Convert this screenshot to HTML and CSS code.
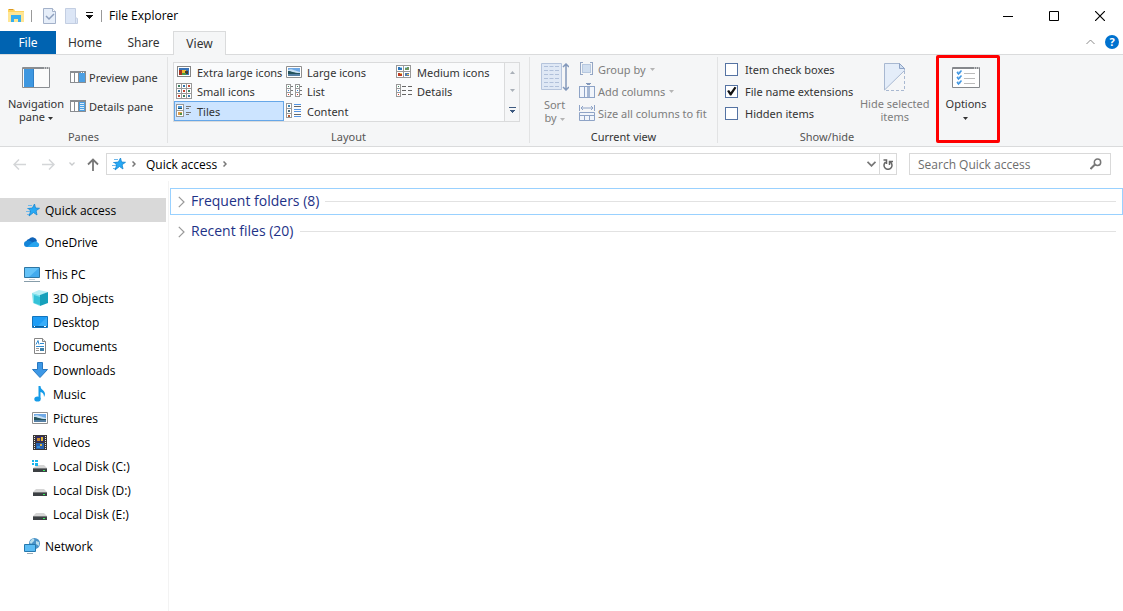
FILE: index.html
```html
<!DOCTYPE html>
<html lang="en">
  <head>
    <meta charset="UTF-8" />
    <meta name="viewport" content="width=device-width, initial-scale=1.0" />
    <title>File Explorer</title>
    <link rel="stylesheet" href="styles.css">
  </head>
  <body>
    <!-- shared icons -->
    <svg class="defs" width="0" height="0" aria-hidden="true">
      <symbol id="star" viewBox="0 0 16 16">
        <path d="M4 3.500h4M3 6.500h4M2 9.500h5M3 12.500h4" stroke="#6db8ec" />
        <path d="M10.500 2l1 4 4 .3-3.400 2.400.9 4.300-3.500-2.500-4.500 3.500 1.700-5-2.500-2.500 4.200-.5z" fill="#27a9f5" stroke="#1686d0" stroke-width=".8" />
      </symbol>
      <symbol id="disk" viewBox="0 0 16 16">
        <path d="M4 7h8l3 3H1z" fill="#d5d5d5" />
        <path d="M1 10h14v4H1z" fill="#3c4043" />
        <path d="M1 10h14v1H1z" fill="#77797b" />
        <path d="M11 12h2v1h-2z" fill="#35f05a" />
      </symbol>
      <symbol id="picture" viewBox="0 0 16 16">
        <path d="M.5 2.500h15v11H.5z" fill="#fff" stroke="#8f8f8f" />
        <path d="M2 4h12v4H2z" fill="#6fa9e6" />
        <path d="M2 6c3-2 5 0 12 2v2H2z" fill="#c8e0f2" />
        <path d="M2 7c4 0 5 2 12 2v1H2z" fill="#23525c" />
        <path d="M2 10h12v2H2z" fill="#5580a4" />
      </symbol>
      <symbol id="down" viewBox="0 0 5 3">
        <path d="M0 0h5L2.500 3z" fill="currentColor" />
      </symbol>
    </svg>

    <div class="window">
      <header class="titlebar">
        <svg class="app-icon" width="16" height="16" viewBox="0 0 16 16">
          <path d="M0 1h6l1 2h9v11H0z" fill="#ffd35c" />
          <path d="M0 4h16v10H0z" fill="#ffe694" />
          <path d="M1 1h4v1H1z" fill="#d9972a" />
          <path d="M3 14V7h10v7h-3v-3H6v3z" fill="#35aef0" />
        </svg>
        <span class="bar"></span>
        <button class="quick" aria-label="Properties">
          <svg width="13" height="16" viewBox="0 0 13 16">
            <path d="M.5.5h9l3 3v12H.5z" fill="#e6eef9" stroke="#a3b1c9" />
            <path d="M9.500.5v3h3" fill="#fff" stroke="#a3b1c9" />
            <path d="M3 8l3 3 5-5" fill="none" stroke="#8d9fbd" stroke-width="1.500" />
          </svg>
        </button>
        <button class="quick" aria-label="New folder">
          <svg width="13" height="16" viewBox="0 0 13 16">
            <path d="M.5.5h10v9l2 1v5H.5z" fill="#dce6f6" stroke="#c3cee2" />
            <path d="M10.500 9.500v6" stroke="#c3cee2" />
          </svg>
        </button>
        <button class="quick customize" aria-label="Customize Quick Access Toolbar">
          <svg width="7" height="7" viewBox="0 0 7 7" shape-rendering="crispEdges">
            <path d="M0 0h7v1H0zM0 3h7v1H6v1H5v1H4v1H3V6H2V5H1V4H0z" fill="#111" />
          </svg>
        </button>
        <span class="bar"></span>
        <h1>File Explorer</h1>
        <div class="caption-buttons">
          <button aria-label="Minimize">
            <svg width="10" height="10" viewBox="0 0 10 10"><path d="M0 5.500h10" stroke="#000" /></svg>
          </button>
          <button aria-label="Maximize">
            <svg width="10" height="10" viewBox="0 0 10 10"><path d="M.5.5h9v9h-9z" fill="none" stroke="#000" /></svg>
          </button>
          <button aria-label="Close">
            <svg width="10" height="10" viewBox="0 0 10 10"><path d="M0 0l10 10M10 0L0 10" stroke="#000" stroke-width="1.200" /></svg>
          </button>
        </div>
      </header>

      <nav class="tabs">
        <button class="tab file">File</button>
        <button class="tab home">Home</button>
        <button class="tab share">Share</button>
        <button class="tab active">View</button>
        <div class="tab-tools">
          <button aria-label="Minimize the ribbon">
            <svg width="9" height="6" viewBox="0 0 9 6"><path d="M.5 5l4-4 4 4" fill="none" stroke="#8a8a8a" /></svg>
          </button>
          <button class="help" aria-label="Help">?</button>
        </div>
      </nav>

      <div class="ribbon">
        <section class="group panes">
          <div class="group-body">
            <button class="big nav-pane">
              <svg width="28" height="21" viewBox="0 0 28 21">
                <path d="M.5.5h27v20H.5z" fill="#fbfbfb" stroke="#8a8d91" />
                <path d="M1 1h26v1H1z" fill="#8a8d91" />
                <path d="M2 2h9v18H2z" fill="#3e97e0" />
                <path d="M11.500 2v18" stroke="#2f7fc6" />
                <path d="M22 1h1M24 1h1M26 1h1" stroke="#fff" />
              </svg>
              <span>Navigation<br />pane <svg class="caret" width="5" height="3"><use href="#down" /></svg></span>
            </button>
            <div class="pane-list">
              <button class="small">
                <svg width="16" height="12" viewBox="0 0 16 12" shape-rendering="crispEdges">
                  <path d="M0 0h16v12H0z" fill="#8a8d91" />
                  <path d="M1 2h3v9H1zM5 2h3v9H5z" fill="#fff" />
                  <path d="M9 2h6v9H9z" fill="#4ca0e4" />
                  <path d="M11 1h1M13 1h1" stroke="#fff" />
                </svg>
                Preview pane
              </button>
              <button class="small">
                <svg width="16" height="12" viewBox="0 0 16 12" shape-rendering="crispEdges">
                  <path d="M0 0h16v12H0z" fill="#8a8d91" />
                  <path d="M1 2h3v9H1zM5 2h3v9H5z" fill="#fff" />
                  <path d="M9 2h6v9H9z" fill="#4ca0e4" />
                  <path d="M10 3h4v1h-4zM10 5h4v1h-4zM10 7h4v1h-4zM10 9h4v1h-4z" fill="#d9ecfb" />
                </svg>
                Details pane
              </button>
            </div>
          </div>
          <h2>Panes</h2>
        </section>

        <section class="group layout">
          <div class="group-body">
            <div class="gallery">
              <div class="gallery-items">
                <button>
                  <svg width="16" height="16" viewBox="0 0 16 16" shape-rendering="crispEdges">
                    <path d="M1.500 2.500h13v10h-13z" fill="#fff" stroke="#858585" />
                    <path d="M3 4h10v7H3z" fill="#3973b8" />
                    <path d="M3 6h3v5H3z" fill="#a33422" /><path d="M6 6h4v3H6z" fill="#f0b92f" />
                    <path d="M9 7h3v3H9z" fill="#463c32" /><path d="M6 9h4v2H6z" fill="#4c9b45" />
                  </svg>
                  Extra large icons
                </button>
                <button><svg width="16" height="16"><use href="#picture" /></svg>Large icons</button>
                <button>
                  <svg width="16" height="16" viewBox="0 0 16 16" shape-rendering="crispEdges">
                    <path d="M.5 1.500h7v6h-7zM7.500 1.500h7v6h-7zM.5 7.500h7v6h-7zM7.500 7.500h7v6h-7z" fill="#fff" stroke="#999" />
                    <path d="M2 3h4v3H2z" fill="#2d76bc" /><path d="M9 3h4v3H9z" fill="#6c9560" />
                    <path d="M2 9h4v3H2z" fill="#be3b20" /><path d="M9 9h4v3H9z" fill="#547ba8" />
                    <path d="M4 3h2v1H4zM9 3h2v1H9z" fill="#9bd0ee" /><path d="M4 9h2v1H4zM11 10h2v1h-2z" fill="#edc04e" />
                  </svg>
                  Medium icons
                </button>
                <button>
                  <svg width="16" height="16" viewBox="0 0 16 16" shape-rendering="crispEdges">
                    <path d="M.5.500h15v15H.5zM5.500 0v16M10.500 0v16M0 5.500h16M0 10.500h16" fill="#fff" stroke="#999" />
                    <path d="M2 2h2v2H2zM12 7h2v2h-2zM7 12h2v2H7z" fill="#3b8060" />
                    <path d="M7 2h2v2H7zM2 7h2v2H2zM12 12h2v2h-2z" fill="#3475a8" />
                    <path d="M12 2h2v2h-2zM7 7h2v2H7zM2 12h2v2H2z" fill="#c14632" />
                  </svg>
                  Small icons
                </button>
                <button>
                  <svg width="16" height="16" viewBox="0 0 16 16" shape-rendering="crispEdges">
                    <path d="M.5 1.500h4v12h-4zM.5 5.500h4M.5 9.500h4M9.500 1.500h4v12h-4zM9.500 5.500h4M9.500 9.500h4" fill="#fff" stroke="#999" />
                    <path d="M5 3.500h2M5 7.500h2M5 11.500h2M14 3.500h2M14 7.500h2M14 11.500h2" stroke="#777" />
                    <path d="M2 3h1v1H2zM11 3h1v1h-1z" fill="#398763" /><path d="M2 7h1v1H2zM11 7h1v1h-1z" fill="#3584df" /><path d="M2 11h1v1H2zM11 11h1v1h-1z" fill="#dd3a2a" />
                  </svg>
                  List
                </button>
                <button>
                  <svg width="16" height="16" viewBox="0 0 16 16" shape-rendering="crispEdges">
                    <path d="M.5 1.500h4v12h-4zM.5 5.500h4M.5 9.500h4" fill="#fff" stroke="#999" />
                    <path d="M6 3.500h4M12 3.500h4M6 7.500h4M12 7.500h4M6 11.500h4M12 11.500h4" stroke="#666" />
                    <path d="M2 3h1v1H2z" fill="#398763" /><path d="M2 7h1v1H2z" fill="#3584df" /><path d="M2 11h1v1H2z" fill="#dd3a2a" />
                  </svg>
                  Details
                </button>
                <button class="selected">
                  <svg width="16" height="16" viewBox="0 0 16 16" shape-rendering="crispEdges">
                    <path d="M.5 1.500h7v6h-7zM.5 7.500h7v6h-7z" fill="#fff" stroke="#999" />
                    <path d="M2 3h4v2H2z" fill="#4c98dc" /><path d="M2 5h4v1H2z" fill="#234f5b" />
                    <path d="M2 9h4v3H2z" fill="#df9d48" /><path d="M4 10h2v2H4z" fill="#519044" />
                    <path d="M10 3.500h5M10 5.500h3M10 9.500h5M10 11.500h3" stroke="#777" />
                  </svg>
                  Tiles
                </button>
                <button>
                  <svg width="16" height="16" viewBox="0 0 16 16" shape-rendering="crispEdges">
                    <path d="M.5.500h5v14h-5zM.5 5.500h5M.5 10.500h5" fill="#fff" stroke="#999" />
                    <path d="M2 2h2v2H2z" fill="#3983b4" /><path d="M2 7h2v2H2z" fill="#496b7d" /><path d="M2 12h2v2H2z" fill="#b4572e" />
                    <path d="M8 1.500h7M8 6.500h7M8 8.500h7M8 13.500h7" stroke="#5696e4" />
                    <path d="M8 3.500h7M8 11.500h7" stroke="#666" />
                  </svg>
                  Content
                </button>
              </div>
              <div class="gallery-scroll">
                <button aria-label="Scroll up"><svg width="5" height="3" viewBox="0 0 5 3"><path d="M0 3h5L2.500 0z" fill="#aab0b8" /></svg></button>
                <button aria-label="Scroll down"><svg width="5" height="3" color="#aab0b8"><use href="#down" /></svg></button>
                <button aria-label="More layouts">
                  <svg width="7" height="6" viewBox="0 0 7 6" shape-rendering="crispEdges"><path d="M0 0h7v1H0zM1 3h5v1H5v1H4v1H3V5H2V4H1z" fill="#3d5a80" /></svg>
                </button>
              </div>
            </div>
          </div>
          <h2>Layout</h2>
        </section>

        <section class="group current">
          <div class="group-body">
            <button class="big sort" disabled>
              <svg width="28" height="28" viewBox="0 0 28 28">
                <path d="M.5.500h20v26H.5z" fill="#dfe8f5" stroke="#b5c4dc" />
                <path d="M3 3.500h15M3 7.500h15M3 11.500h15M3 15.500h15M3 19.500h15M3 23.500h15" stroke="#b0c0da" stroke-dasharray="4 1.500" />
                <path d="M25 2v24M22 4l3-3 3 3M22 24l3 3 3-3" fill="none" stroke="#8298bb" stroke-width="1.500" />
              </svg>
              <span>Sort<br />by <svg class="caret" width="5" height="3"><use href="#down" /></svg></span>
            </button>
            <div class="command-list">
              <button class="small" disabled>
                <svg width="16" height="16" viewBox="0 0 16 16" shape-rendering="crispEdges">
                  <path d="M4 1.500H1.500v12H4M11 1.500h2.500v12H11" fill="none" stroke="#94a6c4" />
                  <path d="M3.500 3.500h8v8h-8z" fill="#d0deef" stroke="#b7c8df" />
                </svg>
                Group by <svg class="caret" width="5" height="3"><use href="#down" /></svg>
              </button>
              <button class="small" disabled>
                <svg width="16" height="16" viewBox="0 0 16 16" shape-rendering="crispEdges">
                  <path d="M.5 3.500h15v11H.5zM5.500 3v12M10.500 3v12" fill="#f1f5fb" stroke="#8ea3c6" />
                  <path d="M8 4h3v10H8z" fill="#a5b7d3" />
                  <path d="M7 0h5v1h-1v1H8V1H7z" fill="#8298bb" />
                </svg>
                Add columns <svg class="caret" width="5" height="3"><use href="#down" /></svg>
              </button>
              <button class="small" disabled>
                <svg width="16" height="16" viewBox="0 0 16 16">
                  <path d="M.5 0v6M15.500 0v6M2 3h12M4 1L2 3l2 2M12 1l2 2-2 2" fill="none" stroke="#8ea3c6" />
                  <path d="M.5 7.500h15v8H.5zM.5 10.500h15M5.500 10v5M10.500 10v5" fill="#f1f5fb" stroke="#8ea3c6" />
                </svg>
                Size all columns to fit
              </button>
            </div>
          </div>
          <h2>Current view</h2>
        </section>

        <section class="group show-hide">
          <div class="group-body">
            <div class="checks">
              <label><input type="checkbox" />Item check boxes</label>
              <label><input type="checkbox" checked />File name extensions</label>
              <label><input type="checkbox" />Hidden items</label>
            </div>
            <button class="big hide-items" disabled>
              <svg width="22" height="28" viewBox="0 0 22 28">
                <path d="M.5.500h15l5 5v2L.5 27z" fill="#e4edf9" stroke="#a8b8d1" />
                <path d="M15.500.5v5h5z" fill="#d0deef" stroke="#8ea3c6" />
                <path d="M20.500 8v19.500H.5" fill="none" stroke="#a8b8d1" stroke-dasharray="3 2" />
              </svg>
              <span>Hide selected<br />items</span>
            </button>
          </div>
          <h2>Show/hide</h2>
        </section>

        <section class="options">
          <button class="big">
            <svg width="28" height="21" viewBox="0 0 28 21">
              <path d="M.5.500h27v20H.5z" fill="#fff" stroke="#85888c" />
              <path d="M1 1h26v1H1z" fill="#85888c" />
              <path d="M22 1h1M24 1h1M26 1h1" stroke="#fff" />
              <path d="M5 4h4v3H5zM5 9h4v3H5zM5 14h4v3H5z" fill="#d8e9f9" />
              <path d="M5 5l1.500 2L9.500 3.500M5 10l1.500 2 3-3.500M5 15l1.500 2 3-3.500" fill="none" stroke="#4197e2" stroke-width="1.500" />
              <path d="M12 6.500h11M12 11.500h11M12 16.500h11" stroke="#bbb" />
            </svg>
            <span>Options<br /><svg class="caret" width="5" height="3"><use href="#down" /></svg></span>
          </button>
        </section>
      </div>

      <div class="address-row">
        <div class="history">
          <button aria-label="Back" disabled>
            <svg width="13" height="11" viewBox="0 0 13 11"><path d="M13 5.500H1M6 .5l-5 5 5 5" fill="none" stroke="#d4d6d8" stroke-width="1.500" /></svg>
          </button>
          <button aria-label="Forward" disabled>
            <svg width="13" height="11" viewBox="0 0 13 11"><path d="M0 5.500h12M7 .5l5 5-5 5" fill="none" stroke="#d4d6d8" stroke-width="1.500" /></svg>
          </button>
          <button class="recent" aria-label="Recent locations" disabled>
            <svg width="6" height="4" viewBox="0 0 6 4"><path d="M.5.500L3 3 5.500.5" fill="none" stroke="#c8cacc" stroke-width="1.300" /></svg>
          </button>
          <button class="up" aria-label="Up">
            <svg width="12" height="13" viewBox="0 0 12 13"><path d="M6 13V1.500M1 6.500l5-5 5 5" fill="none" stroke="#777" stroke-width="1.800" /></svg>
          </button>
        </div>
        <div class="address">
          <svg width="16" height="16"><use href="#star" /></svg>
          <svg width="4" height="6" viewBox="0 0 4 6"><path d="M.5.500L3 3 .5 5.500" fill="none" stroke="#777" stroke-width="1.500" /></svg>
          <button class="crumb">Quick access</button>
          <svg width="4" height="6" viewBox="0 0 4 6"><path d="M.5.500L3 3 .5 5.500" fill="none" stroke="#777" stroke-width="1.500" /></svg>
          <button class="previous" aria-label="Previous locations">
            <svg width="9" height="6" viewBox="0 0 9 6"><path d="M.5.800l4 4 4-4" fill="none" stroke="#777" stroke-width="1.800" /></svg>
          </button>
          <button class="refresh" aria-label="Refresh">
            <svg width="10" height="11" viewBox="0 0 10 11"><path d="M2.500 3.200A4 4 0 1 0 7.500 3.200M.5 1h3v4M6.500 6V2.500H10" fill="none" stroke="#666" stroke-width="1.500" /></svg>
          </button>
        </div>
        <div class="search">
          <input type="text" placeholder="Search Quick access" aria-label="Search Quick access" />
          <svg width="12" height="12" viewBox="0 0 12 12"><circle cx="7.500" cy="4.200" r="3.200" fill="none" stroke="#777" stroke-width="1.500" /><path d="M5 6.500L.5 11" stroke="#777" stroke-width="2" /></svg>
        </div>
      </div>

      <div class="content">
        <nav class="tree">
          <ul>
            <li><a class="current-place" href="#"><svg width="16" height="16"><use href="#star" /></svg>Quick access</a></li>
            <li class="root">
              <a href="#">
                <svg width="16" height="16" viewBox="0 0 16 16">
                  <path d="M2 9a4 4 0 0 1 3-4 4.500 4.500 0 0 1 8 2l-5 6z" fill="#0f63b8" />
                  <path d="M3 13a3 3 0 0 1 0-6c2-1 4 0 6 2l-1 4z" fill="#1384d8" />
                  <path d="M3 13l5-4c2-2 5-2 5.500-.5A2.500 2.500 0 0 1 14 13z" fill="#27a4ee" />
                </svg>
                OneDrive
              </a>
            </li>
            <li class="root">
              <a href="#">
                <svg width="16" height="16" viewBox="0 0 16 16">
                  <path d="M.5 1.500h15v10H.5z" fill="#65c3f8" stroke="#2e76a3" />
                  <path d="M15 2v9H5z" fill="#42aaed" />
                  <path d="M5 13h6v1H5z" fill="#c6d0d6" /><path d="M0 15h16v1H0z" fill="#879daa" />
                </svg>
                This PC
              </a>
              <ul>
                <li><a href="#">
                  <svg width="16" height="16" viewBox="0 0 16 16">
                    <path d="M0 3l7-3 9 2-7 3z" fill="#b8eef4" />
                    <path d="M0 3l8 2v11l-7-3z" fill="#7adfea" />
                    <path d="M8 5l8-3v11l-8 3z" fill="#16a0bb" />
                    <path d="M2 5l6 2v8l-6-2z" fill="#35c2d8" />
                  </svg>
                  3D Objects
                </a></li>
                <li><a href="#">
                  <svg width="16" height="16" viewBox="0 0 16 16">
                    <path d="M.5 2.500h15v11H.5z" fill="#1e9df5" stroke="#1274bd" />
                    <path d="M15 3v9H6z" fill="#38adf9" />
                    <path d="M1 12h14v1H1z" fill="#0b609e" /><path d="M2 12h1v1H2zM12 12h2v1h-2z" fill="#fff" />
                  </svg>
                  Desktop
                </a></li>
                <li><a href="#">
                  <svg width="16" height="16" viewBox="0 0 16 16">
                    <path d="M2.500.500h8l3 3v12h-11z" fill="#fff" stroke="#858585" />
                    <path d="M10.500.5v3h3" fill="#eee" stroke="#858585" />
                    <path d="M4 6.500l2-4 1 4M8 5.500h4M4 8.500h8" fill="none" stroke="#318bd0" />
                    <path d="M4 10.500h3M4 12.500h3" stroke="#999" /><path d="M8 10h4v3H8z" fill="#3d80a9" />
                  </svg>
                  Documents
                </a></li>
                <li><a href="#">
                  <svg width="16" height="16" viewBox="0 0 16 16">
                    <path d="M5.500.500h5v7h5L8 15.500.5 7.500h5z" fill="#3d98e6" stroke="#2878c0" />
                  </svg>
                  Downloads
                </a></li>
                <li><a href="#">
                  <svg width="16" height="16" viewBox="0 0 16 16">
                    <ellipse cx="5.500" cy="13" rx="3.200" ry="2.600" fill="#159be8" />
                    <path d="M6.500 0h2c0 4 4.500 4 4.500 8 0 1-.5 2-1 3 .2-3-1.500-4.500-3.500-5v7h-2z" fill="#159be8" />
                  </svg>
                  Music
                </a></li>
                <li><a href="#"><svg width="16" height="16"><use href="#picture" /></svg>Pictures</a></li>
                <li><a href="#">
                  <svg width="16" height="16" viewBox="0 0 16 16" shape-rendering="crispEdges">
                    <path d="M1 1h14v15H1z" fill="#3a3836" />
                    <path d="M2.500 2v14M13.500 2v14" stroke="#e8e8e8" stroke-dasharray="1 1" />
                    <path d="M4 2h8v6H4z" fill="#332d63" /><path d="M4 9h8v6H4z" fill="#2862b0" />
                    <path d="M5 4h3v3H5z" fill="#c68a2d" /><path d="M9 3h2v4H9z" fill="#e3bc35" />
                    <path d="M5 12h3v2H5z" fill="#3591d8" /><path d="M8 10h2v2H8z" fill="#ddb53b" />
                  </svg>
                  Videos
                </a></li>
                <li><a href="#">
                  <svg width="16" height="16" viewBox="0 0 16 16">
                    <path d="M6 7h6l3 3H1z" fill="#d5d5d5" />
                    <path d="M1 10h14v4H1z" fill="#3c4043" /><path d="M1 10h14v1H1z" fill="#77797b" />
                    <path d="M11 12h2v1h-2z" fill="#35f05a" />
                    <path d="M0 2h2v2H0zM3 2h3v2H3zM0 5h2v2H0zM3 5h3v3H3z" fill="#18b5ed" />
                  </svg>
                  Local Disk (C:)
                </a></li>
                <li><a href="#"><svg width="16" height="16"><use href="#disk" /></svg>Local Disk (D:)</a></li>
                <li><a href="#"><svg width="16" height="16"><use href="#disk" /></svg>Local Disk (E:)</a></li>
              </ul>
            </li>
            <li class="root">
              <a href="#">
                <svg width="16" height="16" viewBox="0 0 16 16">
                  <circle cx="10.500" cy="5.500" r="5.500" fill="#4b93c8" />
                  <path d="M8 1c3-1 3 2 1 3L7 6 5.500 4zM12 3l3 1v4l-3-2z" fill="#b8ddec" />
                  <path d="M.5 6.500h11v7H.5z" fill="#5bbcf4" stroke="#2578ad" />
                  <path d="M3 15.500h6" stroke="#9aabb5" />
                </svg>
                Network
              </a>
            </li>
          </ul>
        </nav>
        <main class="files">
          <button class="section-head focused">
            <svg width="7" height="12" viewBox="0 0 7 12"><path d="M.8.800L6 6 .8 11.200" fill="none" stroke="#999" stroke-width="1.200" /></svg>
            <span>Frequent folders (8)</span>
          </button>
          <button class="section-head">
            <svg width="7" height="12" viewBox="0 0 7 12"><path d="M.8.800L6 6 .8 11.200" fill="none" stroke="#999" stroke-width="1.200" /></svg>
            <span>Recent files (20)</span>
          </button>
        </main>
      </div>
    </div>
  </body>
</html>
```
FILE: styles.css
```css
* {
  box-sizing: border-box;
}
body {
  margin: 0;
  background-color: #fff;
  color: #000;
  font-family: "Open Sans", "Noto Sans", sans-serif;
  font-size: 12px;
}
h1,
h2,
ul {
  margin: 0;
  padding: 0;
  font-size: inherit;
  font-weight: normal;
}
ul {
  list-style: none;
}
button {
  margin: 0;
  padding: 0;
  border: 0;
  background: none;
  color: inherit;
  font: inherit;
}
svg {
  flex: none;
}
.defs {
  position: absolute;
}
.window {
  display: flex;
  flex-direction: column;
  min-height: 100vh;
}

/* title bar */
.titlebar {
  display: flex;
  align-items: center;
  height: 31px;
  padding-left: 8px;
}
.bar {
  width: 1px;
  height: 12px;
  margin: 0 7px;
  background-color: #999;
}
.titlebar .quick {
  display: flex;
  width: 22px;
  padding-left: 4px;
}
.titlebar .customize {
  width: 11px;
  padding-left: 3px;
}
.caption-buttons {
  display: flex;
  align-self: stretch;
  margin-left: auto;
}
.caption-buttons button {
  display: flex;
  align-items: center;
  justify-content: center;
  width: 46px;
}

/* tabs */
.tabs {
  display: flex;
  height: 24px;
  border-bottom: 1px solid #dadbdc;
  font-family: "Noto Sans", "Open Sans", sans-serif;
}
.tab {
  height: 23px;
  color: #333;
}
.tab.file {
  width: 56px;
  background-color: #0063b1;
  color: #fff;
}
.tab.home {
  width: 58px;
}
.tab.share {
  width: 59px;
}
.tab.active {
  width: 53px;
  height: 24px;
  border: 1px solid #dadbdc;
  border-bottom: 0;
  background-color: #f5f6f7;
}
.tab-tools {
  display: flex;
  align-items: center;
  gap: 10px;
  margin-left: auto;
  padding: 0 4px 2px 0;
}
.tab-tools button {
  display: flex;
}
.tab-tools .help {
  justify-content: center;
  width: 14px;
  height: 14px;
  border-radius: 50%;
  background-color: #0072cf;
  color: #fff;
  font-size: 11px;
  font-weight: bold;
  line-height: 14px;
}

/* ribbon */
.ribbon {
  display: flex;
  min-height: 92px;
  border-bottom: 1px solid #dadbdc;
  background-color: #f5f6f7;
  color: #333;
  font-family: "Noto Sans", "Open Sans", sans-serif;
  font-size: 11px;
}
.group {
  display: flex;
  flex-direction: column;
  justify-content: space-between;
  margin: 2px 0 3px;
  border-right: 1px solid #e2e3e4;
}
.group h2 {
  color: #555;
  line-height: 13px;
  text-align: center;
}
.group-body {
  display: flex;
  align-items: flex-start;
}
.big {
  display: flex;
  flex-direction: column;
  align-items: center;
  gap: 9px;
  line-height: 13px;
}
.small {
  display: flex;
  align-items: center;
  gap: 3px;
  white-space: nowrap;
}
.caret {
  vertical-align: middle;
}
.big:disabled,
.small:disabled {
  color: #7d7d7d;
}
.small:disabled .caret,
.big:disabled .caret {
  color: #b5b5b5;
}
.panes {
  width: 168px;
}
.panes .group-body {
  padding-top: 10px;
}
.nav-pane {
  width: 70px;
  padding-left: 2px;
}
.pane-list {
  display: flex;
  flex-direction: column;
  gap: 9px;
}
.pane-list .small {
  height: 20px;
}
.layout {
  width: 362px;
}
.layout .group-body {
  padding: 5px 9px 0 5px;
}
.gallery {
  display: flex;
  flex: 1;
  border: 1px solid #dadbdc;
  background-color: #fafbfc;
}
.gallery-items {
  display: grid;
  flex: 1;
  grid-template-columns: 110px 110px 110px;
  grid-template-rows: 18px 20px 20px;
}
.gallery-items button {
  display: flex;
  align-items: center;
  gap: 5px;
  padding-left: 2px;
  white-space: nowrap;
}
.gallery-items .selected {
  padding-left: 1px;
  border: 1px solid #66a7e8;
  background-color: #cce4ff;
}
.gallery-scroll {
  display: grid;
  width: 15px;
  border-left: 1px solid #dadbdc;
  background-color: #f5f6f7;
}
.gallery-scroll button {
  display: flex;
  align-items: center;
  justify-content: center;
}
.current {
  width: 188px;
}
.command-list,
.checks {
  display: grid;
  grid-auto-rows: 22px;
}
.current .group-body,
.show-hide .group-body {
  padding-top: 1px;
}
.sort {
  width: 49px;
  gap: 7px;
  padding-top: 5px;
}
.command-list .caret {
  margin-left: 1px;
}
.current h2 {
  color: #333;
}
.show-hide {
  width: 218px;
  border-right: 0;
}
.checks {
  padding-left: 7px;
}
.checks label {
  display: flex;
  align-items: center;
  gap: 7px;
  white-space: nowrap;
}
.checks input {
  appearance: none;
  width: 13px;
  height: 13px;
  margin: 0;
  border: 1px solid #5573a3;
  background-color: #fff;
}
.checks input:checked::after {
  display: block;
  height: 11px;
  background-color: #111;
  clip-path: polygon(10% 50%, 28% 42%, 42% 62%, 78% 12%, 95% 20%, 48% 92%, 36% 92%);
  content: "";
}
.hide-items {
  flex: 1;
  gap: 6px;
  padding-top: 5px;
  white-space: nowrap;
}
.options {
  width: 64px;
  margin-bottom: 3px;
  border: 3px solid #f00;
  border-radius: 2px;
}
.options .big {
  width: 54px;
  padding-top: 9px;
}

/* address bar */
.address-row {
  display: flex;
  align-items: center;
  height: 34px;
  padding-right: 12px;
}
.history {
  display: flex;
  align-items: center;
  gap: 16px;
  width: 106px;
  padding-left: 13px;
}
.history button {
  display: flex;
}
.history .recent {
  margin-right: -4px;
  margin-left: -2px;
}
.address {
  display: flex;
  flex: 1;
  align-items: center;
  gap: 6px;
  height: 22px;
  padding-left: 3px;
  border: 1px solid #d9d9d9;
}
.address .crumb {
  padding: 0 0 0 4px;
}
.address .previous {
  display: flex;
  margin-left: auto;
}
.address .refresh {
  display: flex;
  align-items: center;
  align-self: stretch;
  margin-left: -3px;
  padding: 0 3px;
  border-left: 1px solid #d9d9d9;
}
.search {
  display: flex;
  align-items: center;
  width: 202px;
  height: 22px;
  margin-left: 12px;
  padding: 0 8px;
  border: 1px solid #d9d9d9;
}
.search input {
  flex: 1;
  min-width: 0;
  padding: 0;
  border: 0;
  outline: 0;
  font: inherit;
}
.search input::placeholder {
  color: #6d6d6d;
}

/* folder tree and file list */
.content {
  display: flex;
  flex: 1;
}
.tree {
  width: 169px;
  padding: 17px 2px 0 0;
  border-right: 1px solid #f3f3f3;
}
.tree a {
  display: flex;
  align-items: center;
  gap: 5px;
  height: 24px;
  padding-left: 24px;
  color: inherit;
  text-decoration: none;
}
.tree ul ul a {
  padding-left: 32px;
}
.tree .current-place {
  background-color: #d9d9d9;
}
.tree .root {
  margin-top: 8px;
}
.files {
  display: flex;
  flex: 1;
  flex-direction: column;
  gap: 3px;
  padding: 7px 0 0 1px;
}
.section-head {
  display: flex;
  align-items: center;
  gap: 6px;
  height: 27px;
  padding: 0 6px 0 7px;
  border: 1px solid transparent;
  color: #1e3287;
  font-size: 14px;
}
.section-head span {
  padding-bottom: 2px;
}
.section-head::after {
  flex: 1;
  height: 1px;
  background-color: #e2e2e2;
  content: "";
}
.section-head.focused {
  border-color: #99d1ff;
}
```
